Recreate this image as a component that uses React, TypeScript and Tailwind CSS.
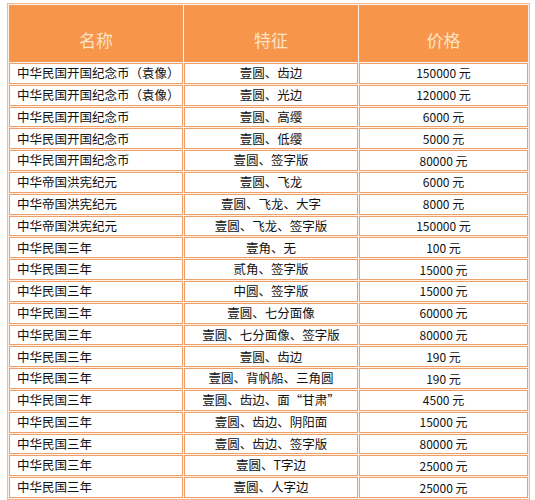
const rows: [string, string, string][] = [
  ['中华民国开国纪念币（袁像）', '壹圆、齿边', '150000 元'],
  ['中华民国开国纪念币（袁像）', '壹圆、光边', '120000 元'],
  ['中华民国开国纪念币', '壹圆、高缨', '6000 元'],
  ['中华民国开国纪念币', '壹圆、低缨', '5000 元'],
  ['中华民国开国纪念币', '壹圆、签字版', '80000 元'],
  ['中华帝国洪宪纪元', '壹圆、飞龙', '6000 元'],
  ['中华帝国洪宪纪元', '壹圆、飞龙、大字', '8000 元'],
  ['中华帝国洪宪纪元', '壹圆、飞龙、签字版', '150000 元'],
  ['中华民国三年', '壹角、无', '100 元'],
  ['中华民国三年', '贰角、签字版', '15000 元'],
  ['中华民国三年', '中圆、签字版', '15000 元'],
  ['中华民国三年', '壹圆、七分面像', '60000 元'],
  ['中华民国三年', '壹圆、七分面像、签字版', '80000 元'],
  ['中华民国三年', '壹圆、齿边', '190 元'],
  ['中华民国三年', '壹圆、背帆船、三角圆', '190 元'],
  ['中华民国三年', '壹圆、齿边、面“甘肃”', '4500 元'],
  ['中华民国三年', '壹圆、齿边、阴阳面', '15000 元'],
  ['中华民国三年', '壹圆、齿边、签字版', '80000 元'],
  ['中华民国三年', '壹圆、T字边', '25000 元'],
  ['中华民国三年', '壹圆、人字边', '25000 元'],
]

export default function App() {
  return (
    <div className="w-[535px] h-[500px] overflow-hidden bg-white pl-[7px] pt-[3px] font-['Noto_Sans_CJK_SC',sans-serif]">
      <table className="w-[523px] table-fixed border-separate border-spacing-[1px] border border-[#f2b990] bg-[#fdf1e8]">
        <colgroup>
          <col className="w-[174px]" />
          <col className="w-[174px]" />
          <col />
        </colgroup>
        <thead>
          <tr>
            {['名称', '特征', '价格'].map((h) => (
              <th
                key={h}
                className="h-[57px] bg-[#f7964a] border border-[#ef9a5c] text-[17px] font-normal text-[#fde3c8] text-center align-middle pt-[12px]"
              >
                {h}
              </th>
            ))}
          </tr>
        </thead>
        <tbody>
          {rows.map(([name, feat, price], i) => (
            <tr key={i}>
              <td className="h-[20.8px] bg-white border border-[#eda06a] text-[12.5px] text-[#111] pl-[7px] leading-none whitespace-nowrap">
                {name}
              </td>
              <td className="h-[20.8px] bg-white border border-[#eda06a] text-[12.5px] text-[#111] text-center leading-none whitespace-nowrap">
                {feat}
              </td>
              <td className="h-[20.8px] bg-white border border-[#eda06a] text-[12px] text-[#111] text-center leading-none whitespace-nowrap">
                {price}
              </td>
            </tr>
          ))}
        </tbody>
      </table>
    </div>
  )
}
